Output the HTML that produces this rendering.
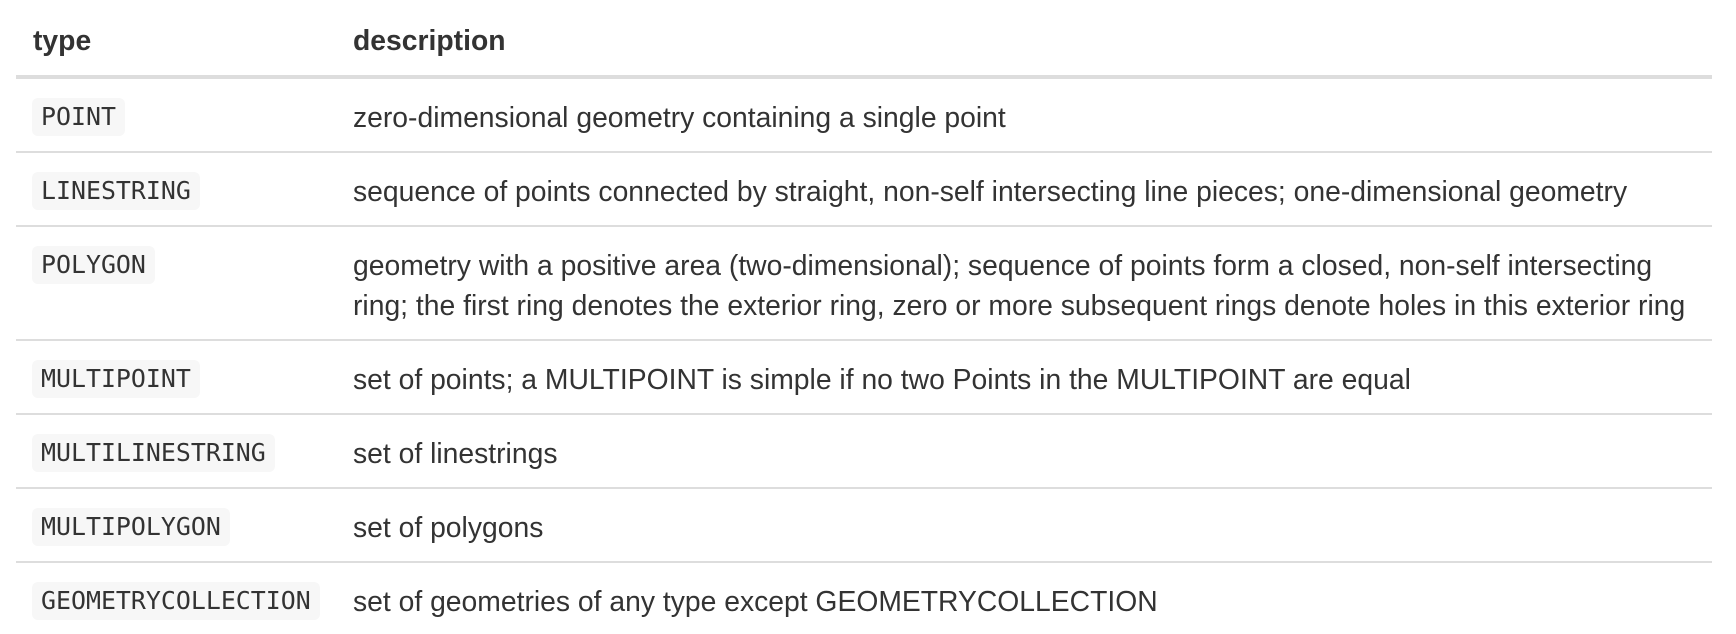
<!DOCTYPE html>
<html><head><meta charset="utf-8"><style>
html,body{margin:0;padding:0;background:#fff;width:1736px;height:634px;overflow:hidden}
body{font-family:"Liberation Sans",Arial,sans-serif;color:#333;font-size:28.3px;position:relative}
.h{position:absolute;font-weight:bold;top:20px;line-height:40px}
.ln{position:absolute;left:16px;width:1696px;height:2px;background:#ddd}
.c{position:absolute;left:32px;height:38px;line-height:38px;padding:0 9px;background:#f7f7f7;border-radius:6px;font-family:"DejaVu Sans Mono","Liberation Mono",monospace;font-size:24.9px;color:#333}
.d{position:absolute;left:353px;line-height:40px;white-space:nowrap}
</style></head><body>
<div class="h" style="left:33px">type</div>
<div class="h" style="left:353px">description</div>
<div class="ln" style="top:75px;height:4px"></div>

<div class="c" style="top:98px">POINT</div>
<div class="d" style="top:97px">zero-dimensional geometry containing a single point</div>
<div class="ln" style="top:151px"></div>

<div class="c" style="top:172px">LINESTRING</div>
<div class="d" style="top:171px">sequence of points connected by straight, non-self intersecting line pieces; one-dimensional geometry</div>
<div class="ln" style="top:225px"></div>

<div class="c" style="top:246px">POLYGON</div>
<div class="d" style="top:245px">geometry with a positive area (two-dimensional); sequence of points form a closed, non-self intersecting<br>ring; the first ring denotes the exterior ring, zero or more subsequent rings denote holes in this exterior ring</div>
<div class="ln" style="top:339px"></div>

<div class="c" style="top:360px">MULTIPOINT</div>
<div class="d" style="top:359px">set of points; a MULTIPOINT is simple if no two Points in the MULTIPOINT are equal</div>
<div class="ln" style="top:413px"></div>

<div class="c" style="top:434px">MULTILINESTRING</div>
<div class="d" style="top:433px">set of linestrings</div>
<div class="ln" style="top:487px"></div>

<div class="c" style="top:508px">MULTIPOLYGON</div>
<div class="d" style="top:507px">set of polygons</div>
<div class="ln" style="top:561px"></div>

<div class="c" style="top:582px">GEOMETRYCOLLECTION</div>
<div class="d" style="top:581px">set of geometries of any type except GEOMETRYCOLLECTION</div>
</body></html>
